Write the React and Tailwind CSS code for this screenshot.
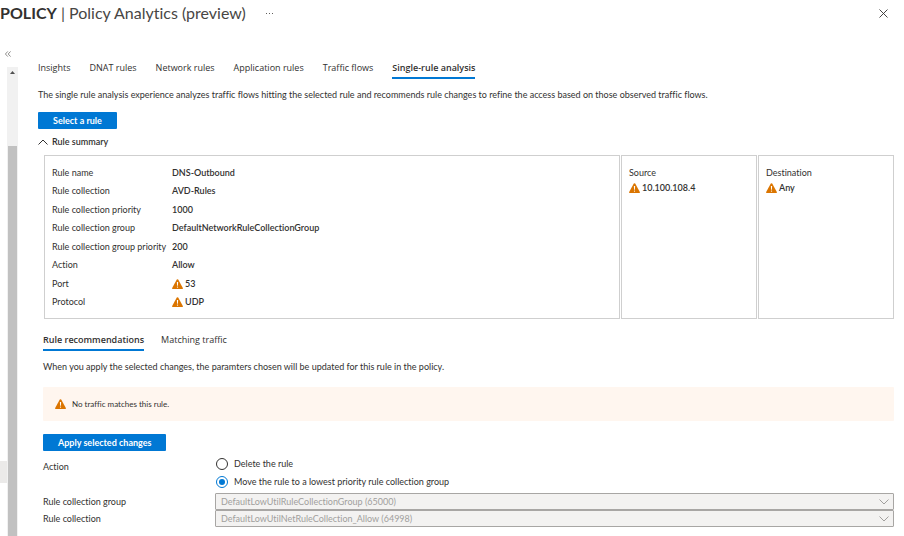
import React, { useState } from 'react';

const tabs = ['Insights', 'DNAT rules', 'Network rules', 'Application rules', 'Traffic flows', 'Single-rule analysis'];

const summary = [
  { label: 'Rule name', value: 'DNS-Outbound' },
  { label: 'Rule collection', value: 'AVD-Rules' },
  { label: 'Rule collection priority', value: '1000' },
  { label: 'Rule collection group', value: 'DefaultNetworkRuleCollectionGroup' },
  { label: 'Rule collection group priority', value: '200' },
  { label: 'Action', value: 'Allow' },
  { label: 'Port', value: '53', warn: true },
  { label: 'Protocol', value: 'UDP', warn: true },
];

function WarningIcon() {
  return (
    <svg className="w-[11px] h-[10px] shrink-0" viewBox="0 0 22 20" aria-hidden="true">
      <path d="M9.6 1.2a1.6 1.6 0 0 1 2.8 0l9 16.4a1.5 1.5 0 0 1-1.3 2.2H1.9a1.5 1.5 0 0 1-1.3-2.2z" fill="#db7500" />
      <path d="M9.8 6h2.4l-.4 7.4h-1.6z" fill="#fff" />
      <circle cx="11" cy="16.2" r="1.3" fill="#fff" />
    </svg>
  );
}

function Chevron({ up, className }) {
  return (
    <svg className={className} viewBox="0 0 10 6" fill="none" stroke="currentColor" aria-hidden="true">
      <path d={up ? 'M.5 5.5 5 1l4.5 4.5' : 'M.5.5 5 5 9.5.5'} />
    </svg>
  );
}

function TabList({ items, active, onSelect, gap }) {
  return (
    <div role="tablist" className={`flex font-['Open_Sans','Noto_Sans',sans-serif] ${gap}`}>
      {items.map((name) => (
        <button
          key={name}
          role="tab"
          aria-selected={name === active}
          onClick={() => onSelect(name)}
          className={
            name === active
              ? 'pb-[3px] border-b-2 border-[#0078d4] font-semibold whitespace-nowrap'
              : 'pb-[3px] border-b-2 border-transparent whitespace-nowrap'
          }
        >
          {name}
        </button>
      ))}
    </div>
  );
}

function Endpoint({ title, value }) {
  return (
    <dl className="border border-[#cfcfcf] px-[7px] py-[11px]">
      <dt>{title}</dt>
      <dd className="mt-[3px] flex items-center gap-0.5 font-semibold">
        <WarningIcon />
        {value}
      </dd>
    </dl>
  );
}

function DisabledSelect({ id, label, value }) {
  return (
    <div className="flex items-center">
      <label htmlFor={id} className="w-[172px] shrink-0">{label}</label>
      <div className="relative flex-1">
        <select
          id={id}
          disabled
          className="block w-full h-[17px] appearance-none rounded-[1px] border border-[#a8a6a4] bg-[#f3f2f1] pl-[5px] pr-6 text-[#a19f9d] opacity-100"
        >
          <option>{value}</option>
        </select>
        <Chevron className="absolute right-[5px] top-[6px] w-[10px] h-[6px] text-[#a19f9d]" />
      </div>
    </div>
  );
}

function RadioOption({ value, checked, onChange, children }) {
  return (
    <label className="flex items-center gap-1.5">
      <input
        type="radio"
        name="action"
        value={value}
        checked={checked}
        onChange={() => onChange(value)}
        className="size-3 appearance-none rounded-full border border-[#323130] p-[2px] bg-clip-content checked:border-[#0078d4] checked:bg-[#0078d4]"
      />
      {children}
    </label>
  );
}

function Sidebar() {
  return (
    <aside className="flex w-[18px] shrink-0 flex-col">
      <button aria-label="Collapse menu" className="mt-6 ml-[5px] h-[6px] w-[6px] text-[#605e5c]">
        <svg className="w-[6px] h-[6px]" viewBox="0 0 6 6" fill="none" stroke="currentColor" strokeWidth=".7">
          <path d="M2.8.4.4 3l2.4 2.6M5.6.4 3.2 3l2.4 2.6" />
        </svg>
      </button>
      <div className="mt-2.5 flex flex-1">
        <div className="w-[7px] pt-[394px]">
          <div className="h-[22px] bg-[#ebeae9]" />
        </div>
        <div className="flex w-[11px] flex-col items-center bg-[#f1f1f1]">
          <svg className="mt-[4px] w-[5px] h-[3px]" viewBox="0 0 5 3" aria-hidden="true">
            <path d="M0 3 2.5 0 5 3z" fill="#505050" />
          </svg>
          <div className="mt-[72px] w-[9px] flex-1 bg-[#c1c1c1]" />
        </div>
      </div>
    </aside>
  );
}

function App() {
  const [tab, setTab] = useState('Single-rule analysis');
  const [subTab, setSubTab] = useState('Rule recommendations');
  const [action, setAction] = useState('move');
  const [open, setOpen] = useState(true);

  return (
    <div className="flex min-h-screen flex-col bg-white font-['Lato','Noto_Sans',sans-serif] text-[9px] leading-3 text-[#323130] [font-variant-ligatures:none]">
      <header className="flex h-[27px] items-center">
        <h1 className="pb-0.5 text-[16px] leading-6 whitespace-nowrap text-[#484644]">
          <span className="font-bold text-[#323130]">POLICY</span> | Policy Analytics (preview)
        </h1>
        <button aria-label="More" className="ml-5 flex gap-0.5">
          <span className="size-px bg-[#605e5c]" />
          <span className="size-px bg-[#605e5c]" />
          <span className="size-px bg-[#605e5c]" />
        </button>
        <button aria-label="Close" className="ml-auto mr-4">
          <svg className="size-[9px]" viewBox="0 0 9 9" fill="none" stroke="#323130" strokeWidth=".9">
            <path d="m.5.5 8 8m0-8-8 8" />
          </svg>
        </button>
      </header>

      <div className="flex flex-1">
        <Sidebar />
        <main className="min-w-0 flex-1 pt-[35px] pl-5 pr-2.5">
          <TabList items={tabs} active={tab} onSelect={setTab} gap="gap-[19px]" />
          <p className="mt-2.5">
            The single rule analysis experience analyzes traffic flows hitting the selected rule and recommends rule changes to refine the access based on those observed traffic flows.
          </p>
          <button className="mt-[11px] block h-[17px] rounded-[1px] bg-[#0078d4] px-[15px] font-bold text-white">
            Select a rule
          </button>

          <button onClick={() => setOpen(!open)} aria-expanded={open} className="mt-[7px] flex items-center gap-1 font-semibold">
            <Chevron up={open} className="w-[10px] h-[6px]" />
            Rule summary
          </button>
          {open && (
            <div className="mt-[7px] ml-1.5 grid min-h-[164px] grid-cols-[1fr_16%_16%] gap-px">
              <dl className="flex flex-col justify-between border border-[#cfcfcf] px-[7px] pt-[11px] pb-2.5">
                {summary.map((row) => (
                  <div key={row.label} className="flex">
                    <dt className="w-[120px] shrink-0 whitespace-nowrap">{row.label}</dt>
                    <dd className="flex items-center gap-0.5 font-semibold">
                      {row.warn && <WarningIcon />}
                      {row.value}
                    </dd>
                  </div>
                ))}
              </dl>
              <Endpoint title="Source" value="10.100.108.4" />
              <Endpoint title="Destination" value="Any" />
            </div>
          )}

          <section className="mt-[15px] ml-[5px]">
            <TabList items={['Rule recommendations', 'Matching traffic']} active={subTab} onSelect={setSubTab} gap="gap-[17px]" />
            <p className="mt-2.5">
              When you apply the selected changes, the paramters chosen will be updated for this rule in the policy.
            </p>
            <div role="status" className="mt-3.5 flex h-[34px] items-center gap-1.5 rounded-[1px] bg-[#fff6ef] pl-3 text-[8px]">
              <WarningIcon />
              No traffic matches this rule.
            </div>
            <button className="mt-[13px] block h-[17px] rounded-[1px] bg-[#0078d4] px-[15px] font-bold text-white">
              Apply selected changes
            </button>
            <fieldset className="mt-[7px] mb-[5px] flex">
              <legend className="float-left mt-[3px] w-[173px]">Action</legend>
              <div className="flex flex-col gap-1.5">
                <RadioOption value="delete" checked={action === 'delete'} onChange={setAction}>
                  Delete the rule
                </RadioOption>
                <RadioOption value="move" checked={action === 'move'} onChange={setAction}>
                  Move the rule to a lowest priority rule collection group
                </RadioOption>
              </div>
            </fieldset>
            <DisabledSelect id="group" label="Rule collection group" value="DefaultLowUtilRuleCollectionGroup (65000)" />
            <DisabledSelect id="collection" label="Rule collection" value="DefaultLowUtilNetRuleCollection_Allow (64998)" />
          </section>
        </main>
      </div>
    </div>
  );
}

export default App;
